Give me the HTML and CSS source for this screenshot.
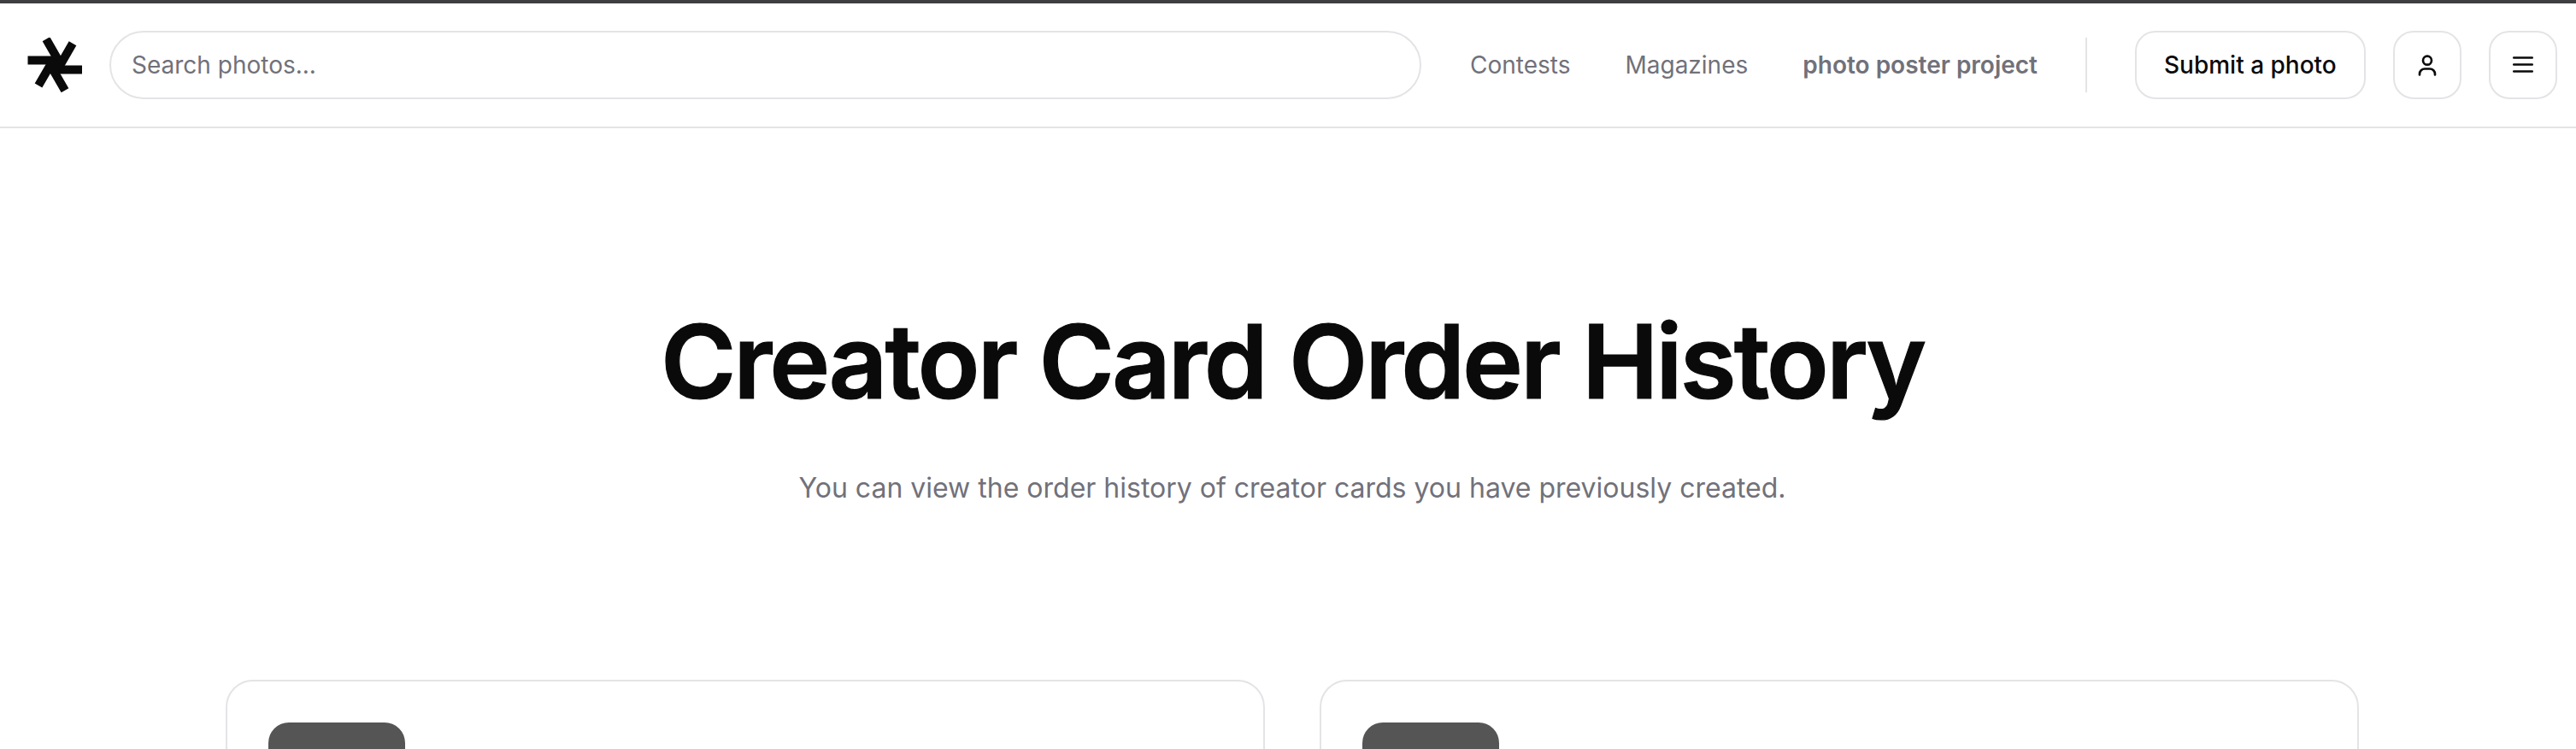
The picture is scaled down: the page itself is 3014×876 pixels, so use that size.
FILE: index.html
```html
<!DOCTYPE html>
<html lang="en">
<head>
    <meta charset="UTF-8">
    <meta name="viewport" content="width=device-width, initial-scale=1.0">
    <title>Creator Card Order History</title>
    <link rel="stylesheet" href="styles.css">
</head>
<body>
    <div class="page">
        <header class="site-header">
            <a href="#" class="logo">
                <svg viewBox="0 0 64 64" width="64" height="64" fill="none" stroke="#0a0a0b" stroke-width="10">
                    <path d="M0.5 26.5 H34 M64 37.5 H30"/>
                    <path d="M22 1.7 L40 33 M44 61.7 L26 30.5"/>
                    <path d="M53 6.7 L35 38 M13 56 L31 25"/>
                </svg>
            </a>
            <input class="search" type="text" placeholder="Search photos...">
            <nav class="nav">
                <a href="#" class="nav-link">Contests</a>
                <a href="#" class="nav-link">Magazines</a>
                <a href="#" class="nav-link nav-link-strong">photo poster project</a>
            </nav>
            <div class="divider"></div>
            <a href="#" class="button">Submit a photo</a>
            <a href="#" class="icon-button">
                <svg viewBox="0 0 32 32" width="32" height="32" fill="none" stroke="#0a0a0b" stroke-width="2.67" stroke-linecap="round">
                    <circle cx="16" cy="10.7" r="5"/>
                    <path d="M7 27.5 v-1 a6 6 0 0 1 6 -6 h6 a6 6 0 0 1 6 6 v1"/>
                </svg>
            </a>
            <a href="#" class="icon-button">
                <svg viewBox="0 0 32 32" width="32" height="32" fill="none" stroke="#0a0a0b" stroke-width="2.67" stroke-linecap="round">
                    <path d="M5.3 7.5 H26.7 M5.3 15.5 H26.7 M5.3 23.5 H26.7"/>
                </svg>
            </a>
        </header>
        <main class="content">
            <h1 class="title">Creator Card Order History</h1>
            <p class="subtitle">You can view the order history of creator cards you have previously created.</p>
            <div class="order-grid">
                <div class="order-card"><div class="status-badge"></div></div>
                <div class="order-card"><div class="status-badge"></div></div>
            </div>
        </main>
    </div>
</body>
</html>
```

FILE: styles.css
```css
html, body {
    margin: 0;
    padding: 0;
    height: 876px;
    overflow: hidden;
    background-color: #fff;
}
.page {
    width: 3024px;
    font-family: Inter, "Liberation Sans", sans-serif;
    color: #0a0a0b;
}
.site-header {
    display: flex;
    align-items: center;
    box-sizing: border-box;
    height: 150px;
    padding: 32px 32px;
    border-top: 4px solid #3f3f41;
    border-bottom: 2px solid #e4e4e7;
}
.logo {
    display: flex;
    flex-shrink: 0;
    width: 64px;
    height: 64px;
    margin-right: 32px;
}
.search {
    flex-shrink: 0;
    box-sizing: border-box;
    width: 1535px;
    height: 80px;
    padding: 0 24px;
    border: 2px solid #e4e4e7;
    border-radius: 40px;
    font-family: inherit;
    font-size: 28px;
    color: #0a0a0b;
    outline: none;
}
.search::placeholder {
    color: #71717a;
}
.nav {
    display: flex;
    gap: 64px;
    margin-left: 57px;
    white-space: nowrap;
}
.nav-link {
    font-size: 28px;
    color: #71717a;
    text-decoration: none;
}
.nav-link-strong {
    font-weight: 600;
}
.divider {
    flex-shrink: 0;
    width: 2px;
    height: 64px;
    margin: 0 56px;
    background-color: #e4e4e7;
}
.button {
    display: flex;
    align-items: center;
    flex-shrink: 0;
    box-sizing: border-box;
    height: 80px;
    padding: 0 32px;
    border: 2px solid #e4e4e7;
    border-radius: 24px;
    font-size: 28px;
    font-weight: 500;
    color: #0a0a0b;
    text-decoration: none;
    white-space: nowrap;
}
.icon-button {
    display: flex;
    align-items: center;
    justify-content: center;
    flex-shrink: 0;
    box-sizing: border-box;
    width: 80px;
    height: 80px;
    margin-left: 32px;
    border: 2px solid #e4e4e7;
    border-radius: 24px;
}
.content {
    width: 2496px;
    margin: 0 auto;
}
.title {
    margin: 201px 0 0;
    font-size: 120px;
    line-height: 144px;
    font-weight: 600;
    letter-spacing: -3px;
    -webkit-text-stroke: 1.2px #0a0a0b;
    text-align: center;
}
.subtitle {
    margin: 52px 0 0;
    font-size: 32px;
    line-height: 48px;
    color: #71717a;
    text-align: center;
}
.order-grid {
    display: grid;
    grid-template-columns: 1fr 1fr;
    gap: 64px;
    margin-top: 200px;
}
.order-card {
    box-sizing: border-box;
    height: 600px;
    padding: 48px;
    border: 2px solid #e4e4e7;
    border-radius: 32px;
}
.status-badge {
    width: 160px;
    height: 80px;
    border-radius: 24px;
    background-color: #555;
}
```
